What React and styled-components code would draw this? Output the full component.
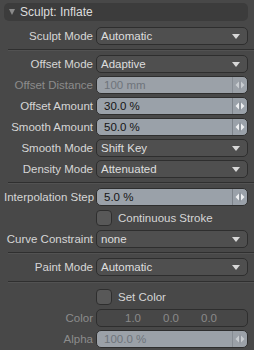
import React from "react";
import styled, { createGlobalStyle } from "styled-components";

const Global = createGlobalStyle`
  html, body { margin: 0; padding: 0; background: #484848; }
  body { font-family: "Liberation Sans", Arial, sans-serif; font-size: 11px; }
`;

const Panel = styled.div`
  width: 254px;
  height: 350px;
  box-sizing: border-box;
  padding: 3px 6px 0 4px;
  display: flex;
  flex-direction: column;
  background: #484848;
  overflow: hidden;
`;

const Header = styled.div`
  height: 18px;
  border-radius: 5px;
  background: #3c3c3c;
  display: flex;
  align-items: center;
  gap: 5px;
  padding-left: 5px;
  color: #dcdcdc;
  font-size: 12px;
  margin-bottom: 6px;
`;

const Tri = styled.span`
  width: 0;
  height: 0;
  border-left: 3.5px solid transparent;
  border-right: 3.5px solid transparent;
  border-top: 6px solid #8a8a8a;
`;

const Rows = styled.div`
  display: flex;
  flex-direction: column;
  gap: 3px;
`;

const Row = styled.div`
  display: grid;
  grid-template-columns: 89px 1fr;
  column-gap: 3px;
  height: 18px;
  align-items: center;
`;

const Label = styled.div`
  text-align: right;
  white-space: nowrap;
  color: ${(p) => (p.$disabled ? "#8c8c8c" : "#d6d6d6")};
  font-size: 11.5px;
`;

const Select = styled.div`
  height: 18px;
  box-sizing: border-box;
  border: 1px solid #2e2e2e;
  border-radius: 5px;
  background: #4f4f4f;
  color: #dedede;
  display: flex;
  align-items: center;
  justify-content: space-between;
  padding: 0 7px 0 4px;
  font-size: 11.5px;
`;

const Arrow = styled.span`
  width: 0;
  height: 0;
  border-left: 4px solid transparent;
  border-right: 4px solid transparent;
  border-top: 5px solid #d8d8d8;
`;

const Num = styled.div`
  height: 18px;
  box-sizing: border-box;
  border: 1px solid #2e2e2e;
  border-radius: 5px;
  background: ${(p) => (p.$disabled ? "#9ba1a8" : "#9aa1a9")};
  color: ${(p) => (p.$disabled ? "#6e747b" : "#151515")};
  display: flex;
  align-items: center;
  font-size: 11.5px;
  overflow: hidden;
`;

const NumText = styled.span`
  flex: 1;
  padding-left: 7px;
`;

const SliderBox = styled.span`
  width: 14px;
  height: 100%;
  border-left: 1px solid ${(p) => (p.$disabled ? "#868c93" : "#7c8289")};
  display: flex;
  align-items: center;
  justify-content: center;
`;

const ColorBox = styled.div`
  height: 18px;
  box-sizing: border-box;
  border: 1px solid #2e2e2e;
  border-radius: 5px;
  background: #474747;
  color: #8a8a8a;
  display: grid;
  grid-template-columns: 38px 38px 38px;
  align-items: center;
  padding-left: 28px;
  font-size: 11.5px;
`;

const CheckRow = styled.div`
  display: flex;
  align-items: center;
  gap: 6px;
  color: #d6d6d6;
  font-size: 11.5px;
`;

const Check = styled.span`
  width: 16px;
  height: 16px;
  box-sizing: border-box;
  border: 1px solid #2e2e2e;
  border-radius: 4px;
  background: #585858;
`;

const Sep = styled.div`
  height: 1px;
  margin: ${(p) => p.$m || "4px -6px 5px 4px"};
  background: #2f2f2f;
  box-shadow: 0 1px 0 #525252;
`;

const SliderIcon = ({ disabled }) => {
  const c = disabled ? "#c9cdd1" : "#eef0f2";
  return (
    <svg width="10" height="10" viewBox="0 0 10 10">
      <polygon points="4,1.5 4,8.5 0.5,5" fill={c} />
      <polygon points="6,1.5 6,8.5 9.5,5" fill={c} />
      <rect x="4.6" y="0.5" width="0.8" height="9" fill={disabled ? "#8a9097" : "#7c8289"} />
    </svg>
  );
};

const SelectRow = ({ label, value }) => (
  <Row>
    <Label>{label}</Label>
    <Select>
      <span>{value}</span>
      <Arrow />
    </Select>
  </Row>
);

const NumRow = ({ label, value, disabled }) => (
  <Row>
    <Label $disabled={disabled}>{label}</Label>
    <Num $disabled={disabled}>
      <NumText>{value}</NumText>
      <SliderBox $disabled={disabled}>
        <SliderIcon disabled={disabled} />
      </SliderBox>
    </Num>
  </Row>
);

const CheckboxRow = ({ label }) => (
  <Row>
    <span />
    <CheckRow>
      <Check />
      <span>{label}</span>
    </CheckRow>
  </Row>
);

export default function App() {
  return (
    <>
      <Global />
      <Panel>
        <Header>
          <Tri />
          <span>Sculpt: Inflate</span>
        </Header>
        <Rows>
          <SelectRow label="Sculpt Mode" value="Automatic" />
        </Rows>
        <Sep />
        <Rows>
          <SelectRow label="Offset Mode" value="Adaptive" />
          <NumRow label="Offset Distance" value="100 mm" disabled />
          <NumRow label="Offset Amount" value="30.0 %" />
          <NumRow label="Smooth Amount" value="50.0 %" />
          <SelectRow label="Smooth Mode" value="Shift Key" />
          <SelectRow label="Density Mode" value="Attenuated" />
        </Rows>
        <Sep />
        <Rows>
          <NumRow label="Interpolation Step" value="5.0 %" />
          <CheckboxRow label="Continuous Stroke" />
          <SelectRow label="Curve Constraint" value="none" />
        </Rows>
        <Sep />
        <Rows>
          <SelectRow label="Paint Mode" value="Automatic" />
        </Rows>
        <Sep $m="5px -6px 6px 4px" />
        <Rows>
          <CheckboxRow label="Set Color" />
          <Row>
            <Label $disabled>Color</Label>
            <ColorBox>
              <span>1.0</span>
              <span>0.0</span>
              <span>0.0</span>
            </ColorBox>
          </Row>
          <NumRow label="Alpha" value="100.0 %" disabled />
        </Rows>
      </Panel>
    </>
  );
}
